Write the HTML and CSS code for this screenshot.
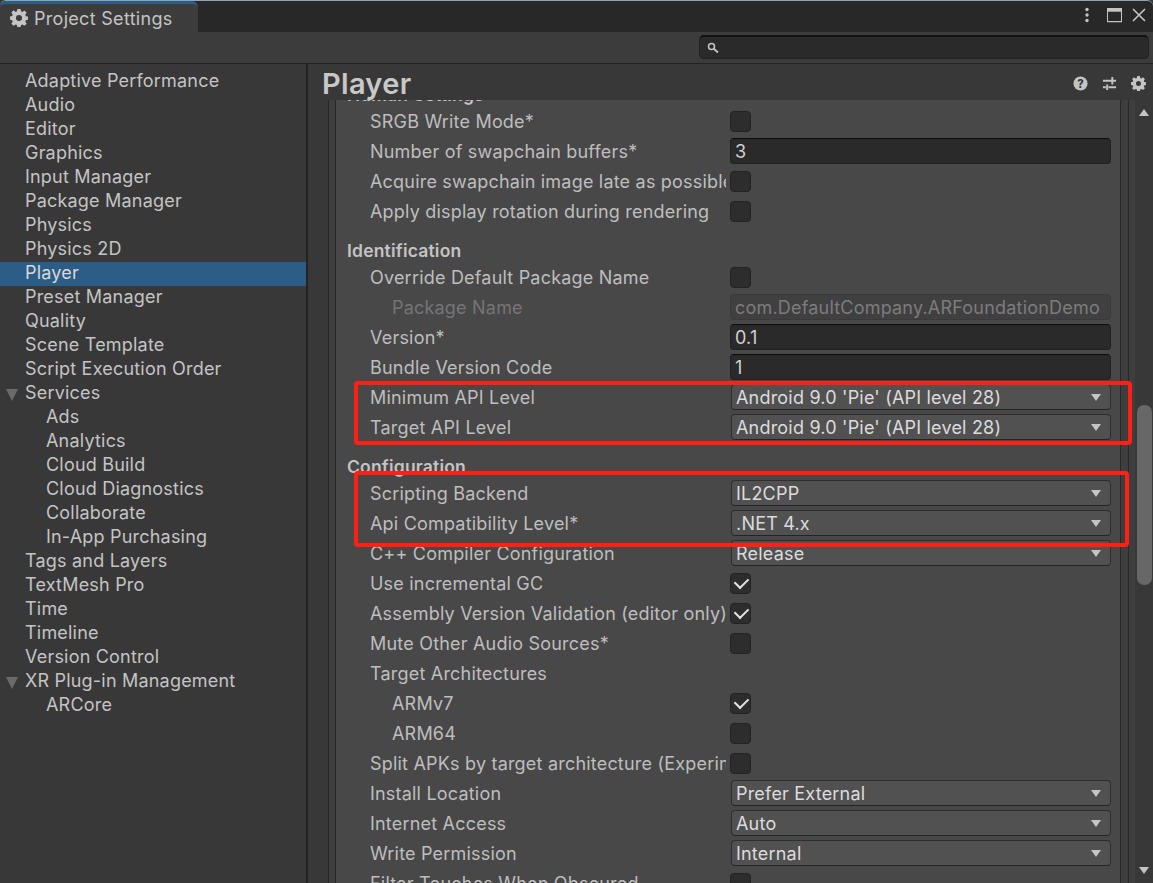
FILE: index.html
```html
<!DOCTYPE html>
<html lang="en">
<head>
<meta charset="utf-8">
<title>Project Settings</title>
<link rel="stylesheet" href="styles.css">
</head>
<body>
<svg class="defs" width="0" height="0" aria-hidden="true">
  <symbol id="gear" viewBox="0 0 16 16">
    <path fill="currentColor" fill-rule="evenodd" d="M6.600 0h2.800l.4 2.100 1.200.5 1.800-1.200 2 2-1.200 1.800.5 1.200 2.100.4v2.800l-2.100.4-.5 1.200 1.200 1.800-2 2-1.800-1.200-1.200.5-.4 2.100H6.600l-.4-2.100-1.200-.5-1.800 1.200-2-2 1.200-1.800-.5-1.200L-.2 9.400V6.600l2.100-.4.5-1.200-1.200-1.800 2-2L5 2.600l1.200-.5zM8 5.300a2.700 2.700 0 1 0 0 5.400 2.700 2.700 0 0 0 0-5.400z"/>
  </symbol>
</svg>

<div class="titlebar">
  <div class="tab">
    <svg class="tab-gear"><use href="#gear"/></svg>
    <span>Project Settings</span>
  </div>
  <div class="win-buttons">
    <svg class="kebab" viewBox="0 0 4 16"><circle cx="2" cy="2.500" r="1.700"/><circle cx="2" cy="8" r="1.700"/><circle cx="2" cy="13.500" r="1.700"/></svg>
    <svg class="maximize" viewBox="0 0 16 16"><path d="M.5 1h15v14H.5z" fill="none" stroke="currentColor" stroke-width="1.200"/><path d="M0 .5h16v4H0z" fill="currentColor"/></svg>
    <svg class="close" viewBox="0 0 14 14"><path d="M1 1l12 12M13 1L1 13" stroke="currentColor" stroke-width="1.600" fill="none"/></svg>
  </div>
</div>

<div class="toolbar">
  <div class="search">
    <svg class="search-icon" viewBox="0 0 12 12"><circle cx="4.500" cy="4.500" r="3" fill="none" stroke="currentColor" stroke-width="1.500"/><path d="M6.800 6.800L11 10.500" stroke="currentColor" stroke-width="1.800"/></svg>
  </div>
</div>

<div class="main">
  <nav class="sidebar">
    <div class="nav-item">Adaptive Performance</div>
    <div class="nav-item">Audio</div>
    <div class="nav-item">Editor</div>
    <div class="nav-item">Graphics</div>
    <div class="nav-item">Input Manager</div>
    <div class="nav-item">Package Manager</div>
    <div class="nav-item">Physics</div>
    <div class="nav-item">Physics 2D</div>
    <div class="nav-item selected">Player</div>
    <div class="nav-item">Preset Manager</div>
    <div class="nav-item">Quality</div>
    <div class="nav-item">Scene Template</div>
    <div class="nav-item">Script Execution Order</div>
    <div class="nav-item parent">Services</div>
    <div class="nav-item child">Ads</div>
    <div class="nav-item child">Analytics</div>
    <div class="nav-item child">Cloud Build</div>
    <div class="nav-item child">Cloud Diagnostics</div>
    <div class="nav-item child">Collaborate</div>
    <div class="nav-item child">In-App Purchasing</div>
    <div class="nav-item">Tags and Layers</div>
    <div class="nav-item">TextMesh Pro</div>
    <div class="nav-item">Time</div>
    <div class="nav-item">Timeline</div>
    <div class="nav-item">Version Control</div>
    <div class="nav-item parent">XR Plug-in Management</div>
    <div class="nav-item child">ARCore</div>
  </nav>

  <section class="content">
    <header class="content-head">
      <h1>Player</h1>
      <div class="head-icons">
        <svg class="head-icon" viewBox="0 0 16 16"><circle cx="8" cy="8" r="7.500" fill="currentColor"/><text x="8" y="12.300" text-anchor="middle" class="q">?</text></svg>
        <svg class="head-icon" viewBox="0 0 16 16"><path d="M1 5h9M12 5h3M1 12h3M7 12h8M11 1v8M5.500 9v6" stroke="currentColor" stroke-width="2" fill="none"/></svg>
        <svg class="head-icon"><use href="#gear"/></svg>
      </div>
    </header>

    <div class="inspector">
      <div class="gutter"></div>
      <div class="panel">
        <div class="form">
          <div class="heading">Human Settings</div>
          <div class="row"><label>SRGB Write Mode*</label><div class="check"></div></div>
          <div class="row"><label>Number of swapchain buffers*</label><div class="field">3</div></div>
          <div class="row"><label>Acquire swapchain image late as possible*</label><div class="check"></div></div>
          <div class="row"><label>Apply display rotation during rendering</label><div class="check"></div></div>

          <div class="heading">Identification</div>
          <div class="row"><label>Override Default Package Name</label><div class="check"></div></div>
          <div class="row sub disabled"><label>Package Name</label><div class="field off">com.DefaultCompany.ARFoundationDemo</div></div>
          <div class="row"><label>Version*</label><div class="field">0.1</div></div>
          <div class="row"><label>Bundle Version Code</label><div class="field">1</div></div>
          <div class="row"><label>Minimum API Level</label><div class="select">Android 9.0 'Pie' (API level 28)</div></div>
          <div class="row"><label>Target API Level</label><div class="select">Android 9.0 'Pie' (API level 28)</div></div>

          <div class="heading">Configuration</div>
          <div class="row"><label>Scripting Backend</label><div class="select">IL2CPP</div></div>
          <div class="row"><label>Api Compatibility Level*</label><div class="select">.NET 4.x</div></div>
          <div class="row"><label>C++ Compiler Configuration</label><div class="select">Release</div></div>
          <div class="row"><label>Use incremental GC</label><div class="check on"></div></div>
          <div class="row"><label>Assembly Version Validation (editor only)</label><div class="check on"></div></div>
          <div class="row"><label>Mute Other Audio Sources*</label><div class="check"></div></div>
          <div class="row"><label>Target Architectures</label></div>
          <div class="row sub"><label>ARMv7</label><div class="check on"></div></div>
          <div class="row sub"><label>ARM64</label><div class="check"></div></div>
          <div class="row"><label>Split APKs by target architecture (Experimental)</label><div class="check"></div></div>
          <div class="row"><label>Install Location</label><div class="select">Prefer External</div></div>
          <div class="row"><label>Internet Access</label><div class="select">Auto</div></div>
          <div class="row"><label>Write Permission</label><div class="select">Internal</div></div>
          <div class="row"><label>Filter Touches When Obscured</label><div class="check"></div></div>
        </div>
      </div>
      <div class="gutter-right"></div>
      <div class="scrollbar">
        <div class="arrow up"></div>
        <div class="track"><div class="thumb"></div></div>
        <div class="arrow down"></div>
      </div>
    </div>
  </section>
</div>

<div class="mark mark-a"></div>
<div class="mark mark-b"></div>
</body>
</html>
```

FILE: styles.css
```css
* { box-sizing: border-box; }

html, body {
  margin: 0;
  height: 883px;
  overflow: hidden;
}

body {
  display: flex;
  flex-direction: column;
  position: relative;
  width: 1153px;
  background: #383838;
  color: #c4c4c4;
  font-family: Inter, "Noto Sans", sans-serif;
  font-size: 18px;
  letter-spacing: 0.2px;
}

.defs { position: absolute; }

.titlebar {
  height: 32px;
  flex: none;
  display: flex;
  justify-content: space-between;
  background: #282828;
  border-top: 1px solid #8fa5b5;
  border-radius: 6px 6px 0 0;
}

.tab {
  width: 198px;
  height: 31px;
  display: flex;
  align-items: center;
  gap: 6px;
  padding-left: 10px;
  background: #3c3c3c;
  border-top: 3px solid #2c5d87;
  border-radius: 6px 6px 0 0;
  color: #c4c4c4;
  font-size: 18px;
  letter-spacing: 0.3px;
}

.tab-gear { width: 18px; height: 18px; color: #c4c4c4; }

.win-buttons {
  display: flex;
  align-items: flex-start;
  padding-top: 6px;
  padding-right: 7px;
  color: #c4c4c4;
}

.kebab { width: 4px; height: 16px; fill: #c4c4c4; margin-right: 18px; }
.maximize { width: 15px; height: 16px; margin-right: 10px; }
.close { width: 14px; height: 14px; margin-top: 1px; }

.toolbar {
  height: 32px;
  flex: none;
  display: flex;
  justify-content: flex-end;
  align-items: flex-start;
  padding: 3px 4px 0 0;
  background: #3c3c3c;
  border-bottom: 1px solid #232323;
}

.search {
  width: 450px;
  height: 24px;
  display: flex;
  align-items: center;
  padding-left: 7px;
  background: #2a2a2a;
  border: 1px solid #212121;
  border-top: 2px solid #111;
  border-radius: 5px;
}

.search-icon { width: 12px; height: 12px; color: #c4c4c4; }

.main {
  flex: 1;
  min-height: 0;
  display: flex;
}

.sidebar {
  width: 308px;
  flex: none;
  padding-top: 6px;
  background: #383838;
  border-right: 2px solid #232323;
}

.nav-item {
  height: 24px;
  line-height: 22px;
  padding-left: 25px;
  white-space: nowrap;
  position: relative;
}

.nav-item.child { padding-left: 46px; }

.nav-item.selected {
  background: #2c5d87;
  color: #d8d8d8;
}

.nav-item.parent::before {
  content: "";
  position: absolute;
  left: 6px;
  top: 7px;
  border-left: 6.500px solid transparent;
  border-right: 6.500px solid transparent;
  border-top: 12px solid #6b6b6b;
}

.content {
  flex: 1;
  min-width: 0;
  display: flex;
  flex-direction: column;
}

.content-head {
  height: 36px;
  flex: none;
  display: flex;
  justify-content: space-between;
  align-items: center;
  padding: 3px 7px 0 14px;
  background: #383838;
  position: relative;
  z-index: 1;
}

h1 {
  margin: 0;
  font-size: 29px;
  font-weight: 600;
  letter-spacing: 0.3px;
  color: #c8c8c8;
}

.head-icons {
  display: flex;
  gap: 14px;
  align-items: center;
  color: #c4c4c4;
}

.head-icon { width: 15px; height: 15px; }

.q {
  font-family: Inter, sans-serif;
  font-size: 12px;
  font-weight: 800;
  fill: #383838;
}

.inspector {
  flex: 1;
  min-height: 0;
  display: flex;
}

.gutter {
  width: 28px;
  flex: none;
  background: #3e3e3e;
  border-left: 20px solid #383838;
  border-right: 1px solid #282828;
  box-shadow: inset 1px 0 #282828;
}

.panel {
  width: 785px;
  flex: none;
  overflow: hidden;
  background: #484848;
  border-right: 1px solid #282828;
}

.form { margin-top: -30px; padding-left: 11px; }

.heading {
  height: 36px;
  padding-top: 14px;
  line-height: 22px;
  font-weight: 600;
  font-size: 17.500px;
  color: #c4c4c4;
}

.row {
  height: 30px;
  display: flex;
  align-items: center;
  padding-left: 23px;
  color: #bebebe;
}

.row label {
  width: 356px;
  margin-right: 4px;
  flex: none;
  white-space: nowrap;
  overflow: hidden;
}

.row.sub { padding-left: 45px; }
.row.sub label { width: 334px; }
.row.disabled label { color: #757575; }

.check {
  width: 21px;
  height: 21px;
  background: #2d2d2d;
  border: 1px solid #232323;
  border-radius: 4px;
  position: relative;
}

.check.on::after {
  content: "";
  position: absolute;
  left: 4px;
  top: 3px;
  width: 11px;
  height: 7px;
  border-left: 2.500px solid #e4e4e4;
  border-bottom: 2.500px solid #e4e4e4;
  transform: rotate(-45deg);
}

.field, .select {
  height: 26px;
  line-height: 25px;
  border-radius: 4px;
  white-space: nowrap;
  overflow: hidden;
}

.field {
  width: 381px;
  padding-left: 4px;
  background: #2a2a2a;
  border: 1px solid #212121;
  border-top-color: #0d0d0d;
  color: #d2d2d2;
}

.field.off {
  background: #404040;
  border-color: #3a3a3a;
  color: #7c7c7c;
}

.select {
  position: relative;
  width: 380px;
  margin-left: 1px;
  padding-left: 4px;
  background: #515151;
  border: 1px solid #2e2e2e;
  border-bottom-color: #242424;
  color: #dcdcdc;
}

.select::after {
  content: "";
  position: absolute;
  right: 9px;
  top: 9px;
  border-left: 5.500px solid transparent;
  border-right: 5.500px solid transparent;
  border-top: 7px solid #c4c4c4;
}

.gutter-right {
  width: 14px;
  flex: none;
  background: #3e3e3e;
  padding-left: 7px;
}

.gutter-right::after {
  content: "";
  display: block;
  width: 1px;
  height: 100%;
  background: #282828;
}

.scrollbar {
  flex: 1;
  display: flex;
  flex-direction: column;
  align-items: center;
  background: #383838;
}

.arrow {
  flex: none;
  width: 0;
  height: 0;
  margin: 9px 0;
  border-left: 5px solid transparent;
  border-right: 5px solid transparent;
}

.arrow.up { border-bottom: 7px solid #c4c4c4; }
.arrow.down { border-top: 7px solid #c4c4c4; }

.track {
  flex: 1;
  width: 100%;
  display: flex;
  flex-direction: column;
  align-items: center;
  justify-content: flex-start;
  padding-top: 280px;
}

.thumb {
  width: 15px;
  height: 180px;
  background: #676767;
  border-radius: 7px;
}

.mark {
  position: absolute;
  border: 4px solid #ff2013;
  border-radius: 4px;
  pointer-events: none;
}

.mark-a { left: 354px; top: 381px; width: 778px; height: 64px; }
.mark-b { left: 354px; top: 471px; width: 775px; height: 76px; }
```
